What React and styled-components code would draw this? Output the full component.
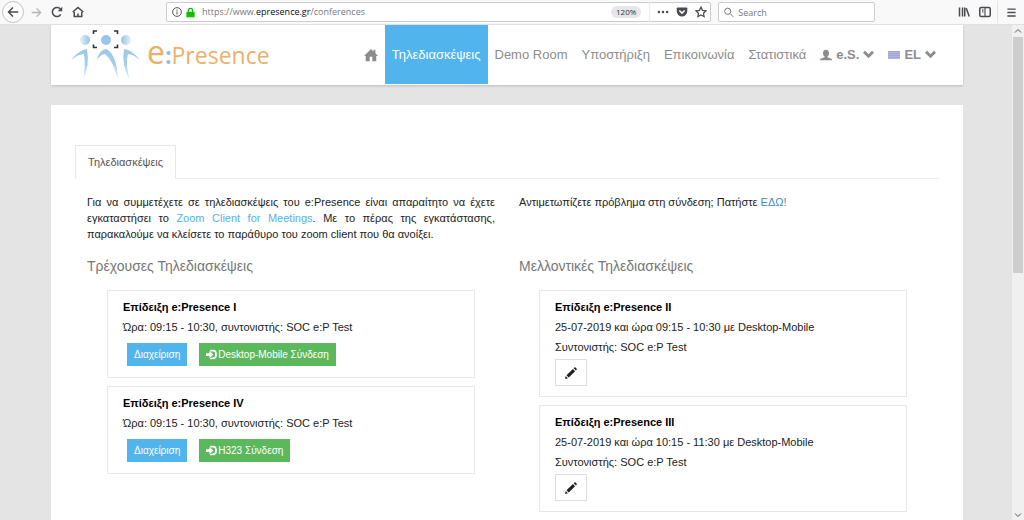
import React from "react"
import styled, { createGlobalStyle } from "styled-components"

const GlobalStyle = createGlobalStyle`
	* {
		box-sizing: border-box;
	}

	body {
		margin: 0;
		font-family: "Liberation Sans", Arial, sans-serif;
		font-size: 11px;
		line-height: 16px;
		color: #222;
		background-color: #e4e4e4;
	}
`

const Browser = styled.div`
	height: 100vh;
	display: flex;
	flex-direction: column;
	overflow: hidden;
`

const Toolbar = styled.div`
	flex: none;
	display: flex;
	align-items: center;
	height: 25px;
	background-color: #f9f9fa;
	border-bottom: 1px solid #e0e0e2;
	font-family: "Open Sans", sans-serif;
	color: #4a4a4f;
`

const BarButton = styled.button`
	display: flex;
	align-items: center;
	justify-content: center;
	flex: none;
	width: ${props => props.$width || 21}px;
	height: 22px;
	padding: 0;
	border: none;
	background: none;
	color: ${props => (props.disabled ? "#b4b4b8" : "#4a4a4f")};
`

const BackButton = styled(BarButton)`
	width: 22px;
	margin: 0 3px 0 2px;
	border: 1px solid #c4c4c6;
	border-radius: 50%;
	background-color: #fdfdfd;
`

const Field = styled.div`
	display: flex;
	align-items: center;
	height: 20px;
	background-color: white;
	border: 1px solid #ccc;
	border-radius: 2px;
`

const AddressBar = styled(Field)`
	flex: 547;
	margin-left: 79px;
	padding-left: 5px;
	gap: 3px;
`

const SearchBar = styled(Field)`
	flex: 147;
	margin-left: 7px;
	padding: 0 5px;
	gap: 4px;
`

const Url = styled.div`
	flex: 1;
	margin-left: 3px;
	font-size: 9px;
	color: #77777b;

	b {
		font-weight: normal;
		color: #0c0c0d;
	}
`

const ZoomLevel = styled.button`
	height: 12px;
	margin-right: 5px;
	padding: 0 5px;
	border: none;
	border-radius: 6px;
	background-color: #e6e6e8;
	font-family: inherit;
	font-size: 8px;
	line-height: 12px;
	color: #333;
`

const PageActions = styled.div`
	display: flex;
	border-left: 1px solid #eee;
	padding-left: 3px;
`

const SearchInput = styled.input`
	width: 100%;
	min-width: 0;
	border: none;
	outline: none;
	padding: 0;
	background: none;
	font-family: inherit;
	font-size: 9px;

	&::placeholder {
		color: #77777b;
		opacity: 1;
	}
`

const WindowTools = styled.div`
	display: flex;
	margin-left: 78px;
`

const MenuButton = styled(BarButton)`
	border-left: 1px solid #e4e4e6;
	margin-left: 2px;
`

const Viewport = styled.div`
	flex: 1;
	display: flex;
	min-height: 0;
`

const Page = styled.div`
	flex: 1;
	min-width: 0;
	padding: 0 49px 0 51px;
	overflow: hidden;
`

const ScrollTrack = styled.div`
	display: flex;
	flex-direction: column;
	align-items: center;
	justify-content: space-between;
	width: 12px;
	padding: 2px 0 1px;
	background-color: #f0f0f0;
	color: #555;
`

const ScrollThumb = styled.div`
	width: 10px;
	height: 48%;
	margin: 2px 0 auto;
	background-color: #cdcdcd;
`

const Header = styled.header`
	display: flex;
	justify-content: space-between;
	height: 60px;
	padding: 0 20px;
	background-color: white;
	box-shadow: 0 1px 2px #bbb;
`

const Brand = styled.a`
	display: flex;
	align-items: center;
	gap: 6px;
	font-family: "Open Sans", sans-serif;
	font-size: 23px;
	color: #edb06a;
	text-decoration: none;
`

const BrandName = styled.span`
	margin-bottom: 4px;

	big {
		font-size: 32px;
	}

	i {
		font-style: normal;
		font-weight: bold;
		color: #8dbfe8;
	}
`

const Nav = styled.nav`
	display: flex;
	height: 59px;
`

const NavLink = styled.a`
	display: flex;
	align-items: center;
	gap: 4px;
	padding: 0 7px;
	font-size: 13px;
	font-weight: ${props => (props.$strong ? "bold" : "normal")};
	text-decoration: none;
	color: ${props => (props.$active ? "white" : "#8c8c8c")};
	background-color: ${props => (props.$active ? "#51b4ec" : "transparent")};
`

const Flag = styled.span`
	width: 12px;
	height: 8px;
	background: repeating-linear-gradient(#a4a4d8 0 1px, #b4b4e2 1px 2px);
`

const Main = styled.main`
	min-height: 100%;
	margin-top: 20px;
	padding: 40px 24px;
	background-color: white;
`

const Tabs = styled.div`
	display: flex;
	border-bottom: 1px solid #ececec;
`

const Tab = styled.button`
	height: 34px;
	margin-bottom: -1px;
	padding: 0 12px;
	border: 1px solid #e8e8e8;
	border-bottom-color: white;
	background-color: white;
	font-family: inherit;
	font-size: 11px;
	color: #555;
`

const Columns = styled.div`
	display: grid;
	grid-template-columns: 1fr 1fr;
	gap: 24px;
	padding: 15px 12px;
`

const Intro = styled.p`
	min-height: 48px;
	margin: 0;
	text-align: justify;
`

const TextLink = styled.a`
	color: ${props => props.$color || "#51b4ec"};
	text-decoration: none;
`

const Heading = styled.h2`
	margin: 14px 0;
	font-size: 14px;
	line-height: 20px;
	font-weight: normal;
	color: #777;
`

const Card = styled.article`
	margin: 0 20px 8px;
	padding: 6px 15px 10px;
	border: 1px solid #e8e8e8;
	line-height: 20px;
`

const CardTitle = styled.h3`
	margin: 0;
	font-size: 11px;
	color: black;
`

const CardText = styled.p`
	margin: 0;
`

const Actions = styled.div`
	display: flex;
	gap: 12px;
	padding: 6px 4px 1px;
`

const ActionButton = styled.button`
	display: flex;
	align-items: center;
	gap: 1px;
	height: 23px;
	padding: 0 7px;
	border: none;
	background-color: ${props => (props.$green ? "#5cb85c" : "#51b4ec")};
	font-family: inherit;
	font-size: 10px;
	color: white;
`

const EditButton = styled.button`
	display: flex;
	align-items: center;
	justify-content: center;
	width: 32px;
	height: 27px;
	margin-top: 2px;
	padding: 0;
	border: 1px solid #ddd;
	background-color: white;
	color: #222;
`

const Icon = ({ size = 12, box = 16, children, ...rest }) => (
	<svg
		width={size}
		height={size}
		viewBox={`0 0 ${box} ${box}`}
		fill='none'
		stroke='currentColor'
		strokeWidth='2'
		aria-hidden='true'
		{...rest}
	>
		{children}
	</svg>
)

const Chevron = () => (
	<Icon size={11} stroke='none' fill='currentColor'>
		<path d='M0 5.500 3 2.500 8 7.500 13 2.500 16 5.500 8 13.500z' />
	</Icon>
)

const SignInIcon = () => (
	<Icon size={11}>
		<path d='M6 2.500h4a4.500 4.500 0 0 1 4.500 4.500v2a4.500 4.500 0 0 1-4.500 4.500H6' strokeWidth='2.500' />
		<path d='M0 6h5V3l6 5-6 5v-3H0z' fill='currentColor' stroke='none' />
	</Icon>
)

const PencilIcon = () => (
	<Icon size={12} stroke='none' fill='currentColor'>
		<path d='M0 16l1-4 3 3zM2 11l8.500-8.500 3 3L5 14zM11.500 1.500l1-1q.8-.6 1.600.2l1.200 1.200q.8.800.2 1.600l-1 1z' />
	</Icon>
)

const Logo = () => (
	<svg width='70' height='54' viewBox='0 0 70 54' aria-hidden='true'>
		<defs>
			<linearGradient id='limb' x1='0' y1='0' x2='0' y2='1'>
				<stop offset='0' stopColor='#9cc8e8' />
				<stop offset='.5' stopColor='#a4cdea' />
				<stop offset='1' stopColor='#edf5fb' />
			</linearGradient>
			<linearGradient id='headLeft'>
				<stop offset='0' stopColor='#e8f3fb' />
				<stop offset='1' stopColor='#94c3e8' />
			</linearGradient>
			<linearGradient id='headRight'>
				<stop offset='0' stopColor='#94c3e8' />
				<stop offset='1' stopColor='#e8f3fb' />
			</linearGradient>
		</defs>
		<circle cx='14' cy='12' r='5' fill='url(#headLeft)' />
		<circle cx='35' cy='12' r='5' fill='#98c6e9' />
		<circle cx='55' cy='12' r='5' fill='url(#headRight)' />
		<g fill='url(#limb)'>
			<path d='M0 32Q8 22 16 21Q19 37 12 52Q15 38 13 26Q7 26 0 32z' />
			<path d='M26 32Q28 22 35 21Q46 26 47 52Q42 32 34 26Q30 26 26 32z' />
			<path d='M53 21Q61 22 69 32Q62 26 57 26Q54 36 59 52Q50 38 53 21z' />
		</g>
		<path
			d='M22.500 6V3H26M43 3h3.500v3M22.500 16.500v3H26M43 19.500h3.500v-3'
			fill='none'
			stroke='#333'
			strokeWidth='1.600'
		/>
	</svg>
)

const BrowserToolbar = () => (
	<Toolbar>
		<BackButton aria-label='Back'>
			<Icon>
				<path d='M15 8H2M8 2 2 8l6 6' />
			</Icon>
		</BackButton>
		<BarButton aria-label='Forward' disabled $width={18}>
			<Icon size={11}>
				<path d='M1 8h13M8 2l6 6-6 6' />
			</Icon>
		</BarButton>
		<BarButton aria-label='Reload' $width={24}>
			<Icon>
				<path d='M13 11a6 6 0 1 1 0-6' />
				<path d='M15 1v6H9z' fill='currentColor' stroke='none' />
			</Icon>
		</BarButton>
		<BarButton aria-label='Home' $width={18}>
			<Icon>
				<path d='M1 8l7-6 7 6M3 8v6h10V8M8 14v-4' />
			</Icon>
		</BarButton>
		<AddressBar>
			<Icon size={10} strokeWidth='1.500'>
				<circle cx='8' cy='8' r='7' />
				<path d='M8 7v5M8 4v2' />
			</Icon>
			<Icon size={11} stroke='#12bc00'>
				<path d='M5 8V5a3 3 0 0 1 6 0v3' />
				<path d='M2 7h12v8H2z' fill='#12bc00' stroke='none' />
			</Icon>
			<Url>
				https://www.<b>epresence.gr</b>/conferences
			</Url>
			<ZoomLevel>120%</ZoomLevel>
			<PageActions>
				<BarButton aria-label='Page actions' $width={20}>
					<Icon fill='currentColor' stroke='none'>
						<circle cx='2.500' cy='8' r='1.700' />
						<circle cx='8' cy='8' r='1.700' />
						<circle cx='13.500' cy='8' r='1.700' />
					</Icon>
				</BarButton>
				<BarButton aria-label='Save to Pocket' $width={18}>
					<Icon>
						<path
							d='M2 2h12a1 1 0 0 1 1 1v4a7 7 0 0 1-14 0V3a1 1 0 0 1 1-1z'
							fill='currentColor'
							stroke='none'
						/>
						<path d='M4.500 6 8 9.500 11.500 6' stroke='white' />
					</Icon>
				</BarButton>
				<BarButton aria-label='Bookmark' $width={19}>
					<Icon strokeWidth='1.600'>
						<path d='m8 1.500 2 4.300 4.700.6-3.400 3.200.9 4.700L8 12l-4.200 2.300.9-4.700L1.300 6.400 6 5.800z' />
					</Icon>
				</BarButton>
			</PageActions>
		</AddressBar>
		<SearchBar>
			<Icon size={11} stroke='#77777b' strokeWidth='1.600'>
				<circle cx='6' cy='6' r='5' />
				<path d='m10 10 5 5' />
			</Icon>
			<SearchInput type='text' placeholder='Search' aria-label='Search' />
		</SearchBar>
		<WindowTools>
			<BarButton aria-label='Library'>
				<Icon>
					<path d='M2 2v12M6 2v12M9 2v12M11 3l4 11' />
				</Icon>
			</BarButton>
			<BarButton aria-label='Sidebar'>
				<Icon>
					<rect x='1' y='2' width='14' height='12' rx='2' />
					<path d='M8 2v12M4 5.500h2M4 8h2' strokeWidth='1.500' />
				</Icon>
			</BarButton>
			<MenuButton aria-label='Menu' $width={27}>
				<Icon size={11}>
					<path d='M2 3h12M2 8h12M2 13h12' />
				</Icon>
			</MenuButton>
		</WindowTools>
	</Toolbar>
)

const SiteHeader = () => (
	<Header>
		<Brand href='#'>
			<Logo />
			<BrandName>
				<big>e</big>
				<i>:</i>Presence
			</BrandName>
		</Brand>
		<Nav>
			<NavLink href='#' aria-label='Home'>
				<Icon size={14} fill='currentColor' stroke='none'>
					<path d='M8 1 0 9h2v6h4.500v-5h3v5H14V9h2l-3-3V2h-2v2z' />
				</Icon>
			</NavLink>
			<NavLink href='#' $active>Τηλεδιασκέψεις</NavLink>
			<NavLink href='#'>Demo Room</NavLink>
			<NavLink href='#'>Υποστήριξη</NavLink>
			<NavLink href='#'>Επικοινωνία</NavLink>
			<NavLink href='#'>Στατιστικά</NavLink>
			<NavLink href='#' $strong>
				<Icon fill='currentColor' stroke='none'>
					<path d='M8 1c3 0 4 2 4 4.500 0 2-.8 3.300-2 4.200V11l5 2q1 .5 1 2H0q0-1.500 1-2l5-2V9.700C4.800 8.800 4 7.500 4 5.500 4 3 5 1 8 1z' />
				</Icon>
				e.S.
				<Chevron />
			</NavLink>
			<NavLink href='#' $strong>
				<Flag />
				EL
				<Chevron />
			</NavLink>
		</Nav>
	</Header>
)

const current = [
	{ title: "Επίδειξη e:Presence I", connect: "Desktop-Mobile Σύνδεση" },
	{ title: "Επίδειξη e:Presence IV", connect: "H323 Σύνδεση" },
]

const upcoming = [
	{ title: "Επίδειξη e:Presence II", time: "09:15 - 10:30" },
	{ title: "Επίδειξη e:Presence III", time: "10:15 - 11:30" },
]

const App = () => (
	<>
		<GlobalStyle />
		<Browser>
			<BrowserToolbar />
			<Viewport>
				<Page>
					<SiteHeader />
					<Main>
						<Tabs>
							<Tab type='button'>Τηλεδιασκέψεις</Tab>
						</Tabs>
						<Columns>
							<section>
								<Intro>
									Για να συμμετέχετε σε τηλεδιασκέψεις του e:Presence είναι
									απαραίτητο να έχετε εγκαταστήσει το{" "}
									<TextLink href='#'>Zoom Client for Meetings</TextLink>. Με το
									πέρας της εγκατάστασης, παρακαλούμε να κλείσετε το παράθυρο
									του zoom client που θα ανοίξει.
								</Intro>
								<Heading>Τρέχουσες Τηλεδιασκέψεις</Heading>
								{current.map(({ title, connect }) => (
									<Card key={title}>
										<CardTitle>{title}</CardTitle>
										<CardText>
											Ώρα: 09:15 - 10:30, συντονιστής: SOC e:P Test
										</CardText>
										<Actions>
											<ActionButton>Διαχείριση</ActionButton>
											<ActionButton $green>
												<SignInIcon />
												{connect}
											</ActionButton>
										</Actions>
									</Card>
								))}
							</section>
							<section>
								<Intro>
									Αντιμετωπίζετε πρόβλημα στη σύνδεση; Πατήστε{" "}
									<TextLink href='#' $color='#428bca'>ΕΔΩ!</TextLink>
								</Intro>
								<Heading>Μελλοντικές Τηλεδιασκέψεις</Heading>
								{upcoming.map(({ title, time }) => (
									<Card key={title}>
										<CardTitle>{title}</CardTitle>
										<CardText>
											25-07-2019 και ώρα {time} με Desktop-Mobile
										</CardText>
										<CardText>Συντονιστής: SOC e:P Test</CardText>
										<EditButton aria-label='Επεξεργασία'>
											<PencilIcon />
										</EditButton>
									</Card>
								))}
							</section>
						</Columns>
					</Main>
				</Page>
				<ScrollTrack>
					<Icon size={8}>
						<path d='m2 11 6-6 6 6' />
					</Icon>
					<ScrollThumb />
					<Icon size={8}>
						<path d='m2 5 6 6 6-6' />
					</Icon>
				</ScrollTrack>
			</Viewport>
		</Browser>
	</>
)

export default App
